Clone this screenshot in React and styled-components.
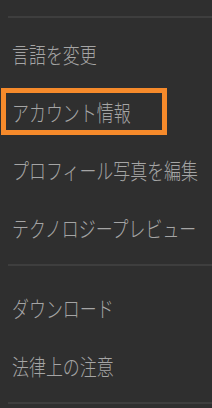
import React from "react";
import styled, { createGlobalStyle } from "styled-components";

const GlobalStyle = createGlobalStyle`
  html, body {
    margin: 0;
    padding: 0;
    background: #2f2f2f;
  }
  body {
    font-family: "Noto Sans CJK JP", "Noto Sans", sans-serif;
  }
`;

const Menu = styled.div`
  width: 212px;
  height: 408px;
  background: #2f2f2f;
  padding-top: 16px;
  box-sizing: border-box;
  overflow: hidden;
`;

const Divider = styled.div`
  height: 2px;
  margin-left: 8px;
  background: #3e3e3e;
`;

const Group = styled.div`
  display: flex;
  flex-direction: column;
  padding: ${(p) => p.$top}px 0 8px;
`;

const Item = styled.div`
  height: 58px;
  display: flex;
  align-items: center;
  padding-left: 1px;
  cursor: pointer;
`;

const Label = styled.div`
  box-sizing: border-box;
  display: flex;
  align-items: center;
  height: 47px;
  width: ${(p) => (p.$selected ? "166px" : "auto")};
  padding-left: 6px;
  border: 5px solid ${(p) => (p.$selected ? "#f68a2b" : "transparent")};
`;

const Text = styled.span`
  display: inline-block;
  font-size: 22px;
  font-weight: 300;
  color: #a5a5a5;
  white-space: nowrap;
  transform: scaleX(0.77);
  transform-origin: left center;
`;

const groups = [
  { top: 6, items: ["言語を変更", "アカウント情報", "プロフィール写真を編集", "テクノロジープレビュー"] },
  { top: 12, items: ["ダウンロード", "法律上の注意"] },
];

export default function App() {
  const selected = "アカウント情報";
  return (
    <>
      <GlobalStyle />
      <Menu>
        {groups.map((g, i) => (
          <React.Fragment key={i}>
            <Divider />
            <Group $top={g.top}>
              {g.items.map((label) => (
                <Item key={label}>
                  <Label $selected={label === selected}>
                    <Text>{label}</Text>
                  </Label>
                </Item>
              ))}
            </Group>
          </React.Fragment>
        ))}
        <Divider />
      </Menu>
    </>
  );
}
